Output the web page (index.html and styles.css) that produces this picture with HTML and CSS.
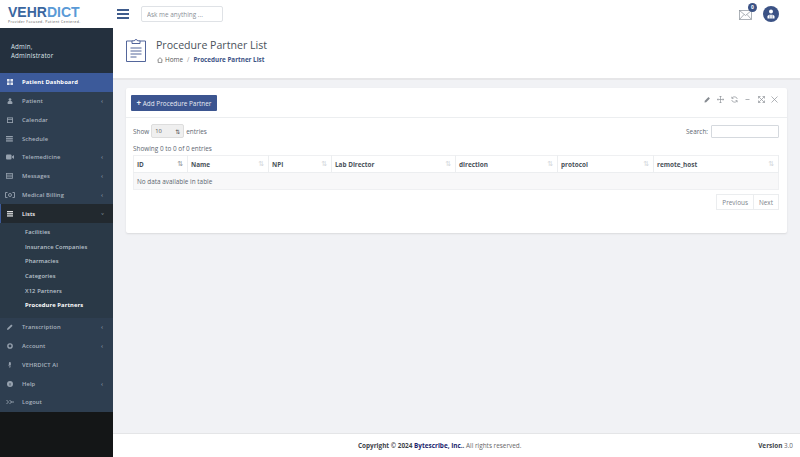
FILE: index.html
```html
<!DOCTYPE html>
<html lang="en">
<head>
  <meta charset="UTF-8">
  <title>Procedure Partner List</title>
  <link rel="stylesheet" href="styles.css">
</head>
<body>
  <header class="topbar">
    <div class="brand">
      <div class="logo"><span class="logo-dark">VEHR</span><span class="logo-light">DICT</span></div>
      <div class="tagline">Provider Focused. Patient Centered.</div>
    </div>
    <div class="burger"><span></span><span></span><span></span></div>
    <input class="ask" type="text" placeholder="Ask me anything ...">
    <div class="top-right">
      <div class="mail">
        <svg width="13" height="10" viewBox="0 0 13 10" fill="none" stroke="#8b929a" stroke-width="0.7"><rect x="0.5" y="0.5" width="12" height="9"/><path d="M0.5 0.5l6 5 6-5M0.5 9.500l4.500-5M12.500 9.500l-4.500-5"/></svg>
        <span class="mail-badge">0</span>
      </div>
      <div class="avatar">
        <svg width="16" height="16" viewBox="0 0 16 16" fill="#fff"><circle cx="8" cy="5.500" r="2"/><path d="M4.500 12.500v-2c0-1.200 1.200-1.800 3.500-1.800s3.500 0.600 3.500 1.800v2z"/><path d="M6.800 9v3.500M9.200 9v3.500" stroke="#3b5285" stroke-width="0.500"/></svg>
      </div>
    </div>
  </header>

  <div class="layout">
    <aside class="sidebar">
      <div class="side-inner">
        <div class="user-panel">Admin,<br>Administrator</div>
        <ul class="menu">
          <li class="item active"><span class="ico">
            <svg width="7" height="7" viewBox="0 0 7 7" fill="currentColor"><rect width="3" height="3"/><rect x="4" width="3" height="3"/><rect y="4" width="3" height="3"/><rect x="4" y="4" width="3" height="3"/></svg>
          </span>Patient Dashboard</li>
          <li class="item"><span class="ico">
            <svg width="7" height="7" viewBox="0 0 7 7" fill="currentColor"><circle cx="3.500" cy="1.800" r="1.600"/><path d="M0.800 7V5c0-1 1-1.500 2.700-1.500S6.200 4 6.200 5v2z"/></svg>
          </span>Patient<span class="caret">‹</span></li>
          <li class="item"><span class="ico">
            <svg width="7" height="7" viewBox="0 0 7 7" fill="none" stroke="currentColor"><rect x="0.500" y="1" width="6" height="5.500"/><path d="M0.500 2.800h6"/></svg>
          </span>Calendar</li>
          <li class="item"><span class="ico">
            <svg width="8" height="7" viewBox="0 0 8 7" fill="currentColor"><rect width="8" height="1.500"/><rect y="2.500" width="8" height="1.500"/><rect y="5" width="8" height="1.500"/></svg>
          </span>Schedule</li>
          <li class="item"><span class="ico">
            <svg width="8" height="6" viewBox="0 0 8 6" fill="currentColor"><rect y="0.500" width="5.500" height="5" rx="1"/><path d="M6 2.500L8 1v4L6 3.500z"/></svg>
          </span>Telemedicine<span class="caret">‹</span></li>
          <li class="item"><span class="ico">
            <svg width="8" height="7" viewBox="0 0 8 7" fill="none" stroke="currentColor" stroke-width="0.900"><rect x="0.500" y="0.500" width="7" height="6"/><path d="M0.500 2.500h7M0.500 4.500h7"/></svg>
          </span>Messages<span class="caret">‹</span></li>
          <li class="item"><span class="ico">
            <svg width="10" height="6" viewBox="0 0 10 6" fill="none" stroke="currentColor" stroke-width="0.900"><path d="M2.500 0.500h-2v5h2M7.500 0.500h2v5h-2"/><circle cx="5" cy="3" r="1.500"/></svg>
          </span>Medical Billing<span class="caret">‹</span></li>
          <li class="item open"><span class="ico">
            <svg width="8" height="7" viewBox="0 0 8 7" fill="currentColor"><rect width="8" height="1.500"/><rect y="2.500" width="8" height="1.500"/><rect y="5" width="8" height="1.500"/></svg>
          </span>Lists<span class="caret caret-down">‹</span></li>
          <li class="submenu">
            <div class="sub">Facilities</div>
            <div class="sub">Insurance Companies</div>
            <div class="sub">Pharmacies</div>
            <div class="sub">Categories</div>
            <div class="sub">X12 Partners</div>
            <div class="sub current">Procedure Partners</div>
          </li>
          <li class="item"><span class="ico">
            <svg width="7" height="7" viewBox="0 0 7 7" fill="currentColor"><path d="M0 7l0.500-2L5 0.500 6.500 2 2 6.500z"/></svg>
          </span>Transcription<span class="caret">‹</span></li>
          <li class="item"><span class="ico">
            <svg width="7" height="7" viewBox="0 0 7 7" fill="none" stroke="currentColor" stroke-width="1.600"><circle cx="3.500" cy="3.500" r="2.500"/></svg>
          </span>Account<span class="caret">‹</span></li>
          <li class="item"><span class="ico">
            <svg width="5" height="8" viewBox="0 0 5 8" fill="currentColor"><rect x="1.200" width="2.600" height="5" rx="1.300"/><path d="M0 3.800h0.600c0 2.300 3.800 2.300 3.800 0H5C5 5 4 5.800 2.900 6V8H2.100V6C1 5.800 0 5 0 3.800z"/></svg>
          </span>VEHRDICT AI</li>
          <li class="item"><span class="ico">
            <svg width="7" height="7" viewBox="0 0 7 7" fill="currentColor"><circle cx="3.500" cy="3.500" r="3.500"/><rect x="3" y="2.500" width="1" height="2.800" fill="#2e3e50"/></svg>
          </span>Help<span class="caret">‹</span></li>
          <li class="item"><span class="ico">
            <svg width="8" height="6" viewBox="0 0 8 6" fill="none" stroke="currentColor" stroke-width="0.900"><path d="M0.500 1l2 2-2 2M3.500 1l2 2-2 2M5 3h3"/></svg>
          </span>Logout</li>
        </ul>
      </div>
    </aside>

    <div class="main">
      <section class="page-head">
        <svg class="page-icon" width="20" height="24" viewBox="0 0 20 24" fill="none" stroke="#3f5590" stroke-width="0.900"><path d="M6 3H0.500v20.500h19V3H14"/><path d="M6 5.500V2.800h2.300a1.800 1.800 0 0 1 3.400 0H14v2.700z"/><path d="M4.500 10h11M4.500 13h11M4.500 16h11M4.500 19h6"/></svg>
        <div>
          <h1>Procedure Partner List</h1>
          <div class="crumbs">
            <svg width="6" height="6" viewBox="0 0 6 6" fill="none" stroke="#666" stroke-width="0.700"><path d="M0.500 3L3 0.700 5.500 3M1.200 2.600v3h3.600v-3"/></svg>
            <span class="crumb-home">Home</span><span class="crumb-sep">/</span><b>Procedure Partner List</b>
          </div>
        </div>
      </section>

      <section class="content">
        <div class="card">
          <div class="card-head">
            <button class="btn-add"><b>+</b> Add Procedure Partner</button>
            <div class="tools">
              <svg width="7" height="7" viewBox="0 0 7 7" fill="#858a90"><path d="M0.500 6.500l0.300-1.700L4.500 1.100l1.400 1.400-3.700 3.700z"/></svg>
              <svg width="7" height="7" viewBox="0 0 7 7" fill="none" stroke="#8f9499" stroke-width="0.700"><path d="M3.500 0v7M0 3.500h7M2.500 1l1-1 1 1M2.500 6l1 1 1-1M1 2.500l-1 1 1 1M6 2.500l1 1-1 1"/></svg>
              <svg width="7" height="7" viewBox="0 0 7 7" fill="none" stroke="#8f9499" stroke-width="0.700"><path d="M1 2.200A2.900 2.900 0 0 1 6.300 3M6 4.800A2.900 2.900 0 0 1 0.700 4M0.800 0.700v1.700h1.700M6.200 6.300V4.600H4.500"/></svg>
              <svg width="7" height="7" viewBox="0 0 7 7" stroke="#8f9499" stroke-width="0.700"><path d="M1.500 3.500h4"/></svg>
              <svg width="7" height="7" viewBox="0 0 7 7" fill="none" stroke="#8f9499" stroke-width="0.700"><path d="M0.500 0.500l6 6M6.500 0.500l-6 6M0.500 2.500v-2h2M4.500 0.500h2v2M0.500 4.500v2h2M4.500 6.500h2v-2"/></svg>
              <svg width="7" height="7" viewBox="0 0 7 7" stroke="#8f9499" stroke-width="0.700"><path d="M0.500 0.500l6 6M6.500 0.500l-6 6"/></svg>
            </div>
          </div>
          <div class="card-body">
            <div class="table-top">
              <div class="length">Show
                <span class="select">10<i>⇅</i></span>
                entries</div>
              <div class="search">Search: <input type="text"></div>
            </div>
            <div class="info">Showing 0 to 0 of 0 entries</div>
            <table class="grid">
              <thead>
                <tr>
                  <th class="c-id">ID<i class="sort on">⇅</i></th>
                  <th class="c-name">Name<i class="sort">⇅</i></th>
                  <th class="c-npi">NPI<i class="sort">⇅</i></th>
                  <th class="c-lab">Lab Director<i class="sort">⇅</i></th>
                  <th class="c-dir">direction<i class="sort">⇅</i></th>
                  <th class="c-pro">protocol<i class="sort">⇅</i></th>
                  <th>remote_host<i class="sort">⇅</i></th>
                </tr>
              </thead>
              <tbody>
                <tr><td colspan="7">No data available in table</td></tr>
              </tbody>
            </table>
            <div class="pager"><span>Previous</span><span>Next</span></div>
          </div>
        </div>
      </section>

      <footer class="foot">
        <div class="copy"><b>Copyright © 2024 <span class="foot-link">Bytescribe, Inc.</span>.</b> All rights reserved.</div>
        <div class="ver"><b>Version</b> 3.0</div>
      </footer>
    </div>
  </div>
</body>
</html>
```

FILE: styles.css
```css
* {
  box-sizing: border-box;
}
html, body {
  height: 100%;
}
body {
  margin: 0;
  height: 457px;
  overflow: hidden;
  display: flex;
  flex-direction: column;
  font-family: "Open Sans", sans-serif;
  font-size: 6.4px;
  color: #5c6670;
  background: #fff;
}

/* top bar */
.topbar {
  height: 28px;
  display: flex;
  align-items: center;
  background: #fff;
  flex-shrink: 0;
}
.brand {
  width: 113px;
  padding-left: 8px;
  padding-top: 1px;
}
.logo {
  font-family: "Liberation Sans", sans-serif;
  font-size: 14px;
  font-weight: 700;
  line-height: 13px;
}
.logo-dark {
  color: #3a669f;
}
.logo-light {
  color: #5a9ad6;
}
.tagline {
  font-size: 3.5px;
  line-height: 5px;
  color: #555;
  letter-spacing: 0.4px;
  white-space: nowrap;
}
.burger {
  width: 12px;
  margin-left: 4px;
  display: flex;
  flex-direction: column;
  gap: 2px;
}
.burger span {
  height: 2px;
  background: #3f5c8c;
}
.ask {
  width: 82px;
  height: 16px;
  margin-left: 12px;
  padding: 0 5px;
  border: 1px solid #dfe2e6;
  border-radius: 2px;
  font-family: inherit;
  font-size: 6.4px;
}
.ask::placeholder {
  color: #8a9097;
}
.top-right {
  margin-left: auto;
  margin-right: 21px;
  display: flex;
  align-items: center;
  gap: 11px;
}
.mail {
  position: relative;
  height: 10px;
  margin-top: 1px;
}
.mail svg {
  display: block;
}
.mail-badge {
  position: absolute;
  top: -7px;
  right: -5px;
  width: 9px;
  height: 9px;
  border-radius: 50%;
  background: #3b5285;
  color: #fff;
  font-size: 5px;
  font-weight: 700;
  line-height: 9px;
  text-align: center;
}
.avatar {
  width: 16px;
  height: 16px;
  border-radius: 50%;
  background: #3b5285;
}
.avatar svg {
  display: block;
}

/* layout */
.layout {
  flex: 1;
  display: flex;
  min-height: 0;
}
.sidebar {
  width: 113px;
  flex-shrink: 0;
  background: #141617;
}
.side-inner {
  background: #2e3e50;
}
.user-panel {
  height: 45px;
  padding: 15px 0 0 11px;
  background: #24303e;
  color: #dfe4ea;
  font-size: 6.2px;
  line-height: 8.500px;
  letter-spacing: 0.2px;
}
.menu {
  list-style: none;
  margin: 0;
  padding: 0;
}
.item {
  height: 18.75px;
  display: flex;
  align-items: center;
  color: #a9b3bf;
  font-size: 5.800px;
  font-weight: 600;
  letter-spacing: 0.1px;
}
.ico {
  width: 22px;
  flex-shrink: 0;
  display: flex;
  justify-content: center;
  padding-left: 2px;
  padding-right: 5px;
  opacity: 0.85;
}
.ico svg {
  height: 6px;
  width: auto;
}
.caret {
  margin-left: auto;
  margin-right: 10px;
  font-size: 6px;
  line-height: 6px;
  color: #8995a3;
}
.caret-down {
  transform: rotate(-90deg);
}
.active {
  background: #3c5a9a;
  color: #fff;
  font-weight: 700;
}
.open {
  background: #22292f;
  color: #fff;
  border-left: 1px solid #3c5a9a;
}
.open .ico {
  width: 21px;
}
.submenu {
  background: #2a3947;
  height: 95px;
  padding-top: 2px;
}
.sub {
  height: 14.67px;
  line-height: 14.67px;
  padding-left: 25px;
  color: #bac3cd;
  font-size: 5.800px;
  font-weight: 600;
  letter-spacing: 0.1px;
}
.current {
  color: #fff;
  font-weight: 700;
}

/* main column */
.main {
  flex: 1;
  min-width: 0;
  display: flex;
  flex-direction: column;
  background: #f1f2f5;
}
.page-head {
  height: 52px;
  display: flex;
  align-items: flex-start;
  background: #fff;
  border-bottom: 2px solid #e6e6e8;
  padding: 10px 0 0 13px;
  flex-shrink: 0;
}
.page-icon {
  margin-right: 10px;
  flex-shrink: 0;
}
h1 {
  margin: 0;
  font-size: 10.600px;
  line-height: 14px;
  font-weight: 400;
  color: #4a525a;
}
.crumbs {
  margin-top: 3px;
  font-size: 6.4px;
  line-height: 9px;
  display: flex;
  align-items: center;
}
.crumbs svg {
  margin-left: 1px;
}
.crumb-home {
  margin-left: 2px;
  color: #555;
}
.crumb-sep {
  margin: 0 4px;
  color: #999;
}
.crumbs b {
  color: #3c5285;
  font-weight: 700;
  font-size: 6.3px;
}

.content {
  flex: 1;
  padding: 8px 13px 0;
}
.card {
  height: 145px;
  background: #fff;
  box-shadow: 0 1px 2px rgba(0, 0, 0, 0.1);
  border-radius: 2px;
}
.card-head {
  height: 30px;
  display: flex;
  align-items: center;
  justify-content: space-between;
  padding: 0 9px 0 5px;
  border-bottom: 1px solid #eceef0;
}
.btn-add {
  height: 16px;
  width: 86px;
  padding: 0;
  border: 0;
  border-radius: 1px;
  background: #3c5590;
  color: #e8ecf4;
  font-family: inherit;
  font-size: 6.4px;
  line-height: 16px;
}
.btn-add b {
  font-size: 8px;
}
.tools {
  display: flex;
  gap: 6.400px;
  margin-top: -7px;
}
.tools svg {
  display: block;
}
.card-body {
  padding: 6px 8px 0 7px;
}
.table-top {
  display: flex;
  justify-content: space-between;
  align-items: center;
  height: 14px;
}
.length {
  display: flex;
  align-items: center;
  gap: 2px;
}
.select {
  width: 33px;
  height: 14px;
  padding: 0 3px 0 3px;
  display: flex;
  align-items: center;
  justify-content: space-between;
  font-size: 5.800px;
  color: #555;
  background: #efefef;
  border: 1px solid #ddd;
  border-radius: 2px;
}
.select i {
  font-family: "DejaVu Sans", sans-serif;
  font-style: normal;
  font-size: 6px;
}
.search {
  display: flex;
  align-items: center;
  gap: 3px;
}
.search input {
  width: 68px;
  height: 13px;
  border: 1px solid #d5d9de;
  border-radius: 1px;
}
.info {
  margin-top: 6px;
  line-height: 10px;
}
.grid {
  width: 646px;
  margin-top: 1px;
  border-collapse: collapse;
  table-layout: fixed;
  border: 1px solid #eff0f2;
}
.grid th {
  position: relative;
  height: 17px;
  padding: 0 3px;
  text-align: left;
  font-size: 6.4px;
  font-weight: 700;
  color: #4a525a;
  border-right: 1px solid #eceef0;
  border-bottom: 1px solid #eceef0;
}
.grid td {
  height: 17px;
  padding: 0 3px;
  background: #f8f8f9;
}
.sort {
  position: absolute;
  right: 4px;
  top: 4px;
  font-family: "DejaVu Sans", sans-serif;
  font-style: normal;
  font-weight: 400;
  font-size: 7px;
  color: #d3d6da;
}
.sort.on {
  color: #8f959b;
}
.c-id {
  width: 54px;
}
.c-name {
  width: 81px;
}
.c-npi {
  width: 63px;
}
.c-lab {
  width: 124px;
}
.c-dir {
  width: 102px;
}
.c-pro {
  width: 96px;
}
.pager {
  display: flex;
  justify-content: flex-end;
  margin-top: 4px;
}
.pager span {
  height: 16px;
  line-height: 15px;
  padding: 0 5px;
  border: 1px solid #ebedef;
  color: #7d848b;
}
.pager span + span {
  border-left: 0;
}

.foot {
  height: 24px;
  flex-shrink: 0;
  display: flex;
  align-items: center;
  background: #fff;
  border-top: 1px solid #e4e5e7;
  padding: 0 7px 0 245px;
  font-size: 6.4px;
  color: #666;
}
.foot b {
  color: #3e444a;
  font-weight: 700;
}
.foot .foot-link {
  color: #1c1f6e;
}
.ver {
  margin-left: auto;
}
```
